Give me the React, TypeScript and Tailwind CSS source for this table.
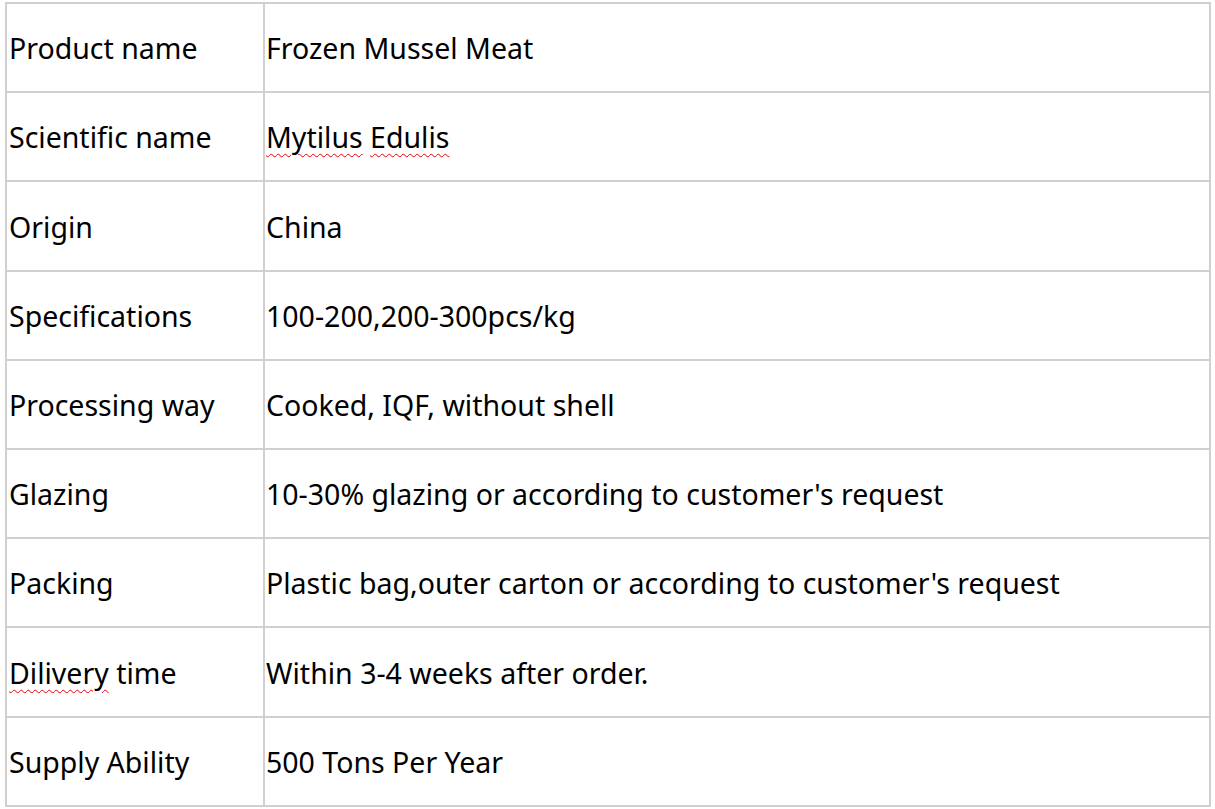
import React from "react";

const wavy = "underline decoration-wavy decoration-red-600 decoration-1 underline-offset-[5px]";

const rows: { label: React.ReactNode; value: React.ReactNode }[] = [
  { label: "Product name", value: "Frozen Mussel Meat" },
  {
    label: "Scientific name",
    value: (
      <>
        <span className={wavy}>Mytilus</span> <span className={wavy}>Edulis</span>
      </>
    ),
  },
  { label: "Origin", value: "China" },
  { label: "Specifications", value: "100-200,200-300pcs/kg" },
  { label: "Processing way", value: "Cooked, IQF, without shell" },
  { label: "Glazing", value: "10-30% glazing or according to customer's request" },
  { label: "Packing", value: "Plastic bag,outer carton or according to customer's request" },
  {
    label: (
      <>
        <span className={wavy}>Dilivery</span> time
      </>
    ),
    value: "Within 3-4 weeks after order.",
  },
  { label: "Supply Ability", value: "500 Tons Per Year" },
];

export default function App() {
  return (
    <div className="w-[1215px] h-[809px] bg-white overflow-hidden pt-[2px] pl-[5px]" style={{ fontFamily: '"Noto Sans", "Open Sans", sans-serif' }}>
      <div className="w-[1206px] border-t-2 border-l-2 border-[#d0d0d0] text-black text-[28.5px]">
        {rows.map((r, i) => (
          <div key={i} className="grid grid-cols-[258px_1fr] h-[89.2px]">
            <div className="border-r-2 border-b-2 border-[#d0d0d0] flex items-center pl-[2px] pt-[2px] whitespace-nowrap">
              <span>{r.label}</span>
            </div>
            <div className="border-r-2 border-b-2 border-[#d0d0d0] flex items-center pl-[1px] pt-[2px] whitespace-nowrap">
              <span>{r.value}</span>
            </div>
          </div>
        ))}
      </div>
    </div>
  );
}
